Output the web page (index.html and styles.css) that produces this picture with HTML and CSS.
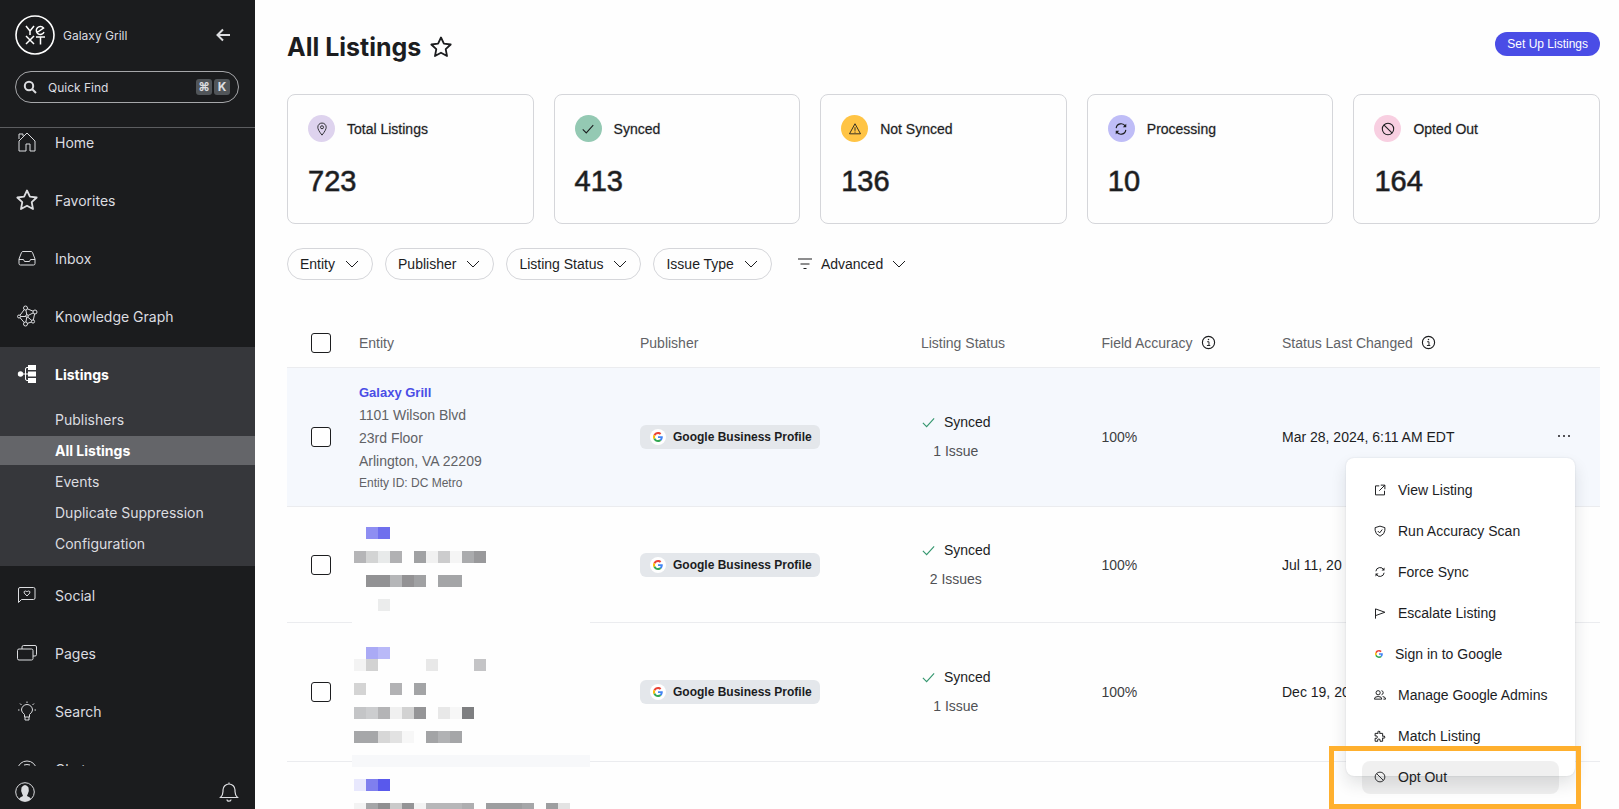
FILE: index.html
```html
<!DOCTYPE html>
<html lang="en">
	<head>
		<meta charset="utf-8">
		<meta name="viewport" content="width=device-width, initial-scale=1">
		<title>All Listings</title>
		<link rel="stylesheet" href="styles.css">
	</head>
	<body>
		<!-- shared icons -->
		<svg class="sprite" aria-hidden="true">
			<symbol id="chevron" viewBox="0 0 16 16"><path d="M2 5l6 6 6-6" fill="none" stroke="currentColor"/></symbol>
			<symbol id="check" viewBox="0 0 16 16"><path d="M2 8.500l4 4 8-9" fill="none" stroke="currentColor" stroke-width="1.200"/></symbol>
			<symbol id="star" viewBox="0 0 24 24"><path d="M12 2.500l2.900 6.200 6.800.8-5 4.700 1.300 6.800-6-3.300L6 21l1.300-6.800-5-4.700 6.800-.8z" fill="none" stroke="currentColor" stroke-width="1.800" stroke-linejoin="round"/></symbol>
			<symbol id="sync" viewBox="0 0 16 16"><path d="M2.500 7A5.600 5.600 0 0 1 13 5M13.500 9A5.600 5.600 0 0 1 3 11" fill="none" stroke="currentColor" stroke-width="1.300"/><path d="M14 2v4h-4zM2 14v-4h4z" fill="currentColor" stroke="none"/></symbol>
			<symbol id="ban" viewBox="0 0 16 16"><g fill="none" stroke="currentColor" stroke-width="1.200"><circle cx="8" cy="8" r="6.500"/><path d="M3.500 3.500l9 9"/></g></symbol>
			<symbol id="info" viewBox="0 0 16 16"><circle cx="8" cy="8" r="6.500" fill="none" stroke="currentColor" stroke-width="1.200"/><path d="M6.500 7.200h2V11M6.300 11.200h3.600" fill="none" stroke="currentColor"/><circle cx="8" cy="4.800" r=".8" fill="currentColor"/></symbol>
			<symbol id="google" viewBox="0 0 48 48">
				<path fill="#ea4335" d="M24 9.500c3.540 0 6.710 1.220 9.210 3.600l6.850-6.850C35.900 2.380 30.470 0 24 0 14.620 0 6.510 5.380 2.560 13.220l7.980 6.190C12.430 13.720 17.740 9.500 24 9.500z"/>
				<path fill="#4285f4" d="M46.980 24.550c0-1.570-.15-3.090-.38-4.550H24v9.020h12.940c-.58 2.960-2.260 5.480-4.780 7.180l7.730 6c4.510-4.180 7.090-10.360 7.090-17.650z"/>
				<path fill="#fbbc05" d="M10.530 28.590c-.48-1.450-.76-2.990-.76-4.590s.27-3.140.76-4.590l-7.980-6.190C.92 16.460 0 20.120 0 24c0 3.880.92 7.540 2.560 10.780l7.970-6.190z"/>
				<path fill="#34a853" d="M24 48c6.480 0 11.930-2.130 15.890-5.810l-7.730-6c-2.150 1.450-4.920 2.300-8.160 2.300-6.260 0-11.570-4.220-13.470-9.910l-7.980 6.190C6.510 42.620 14.620 48 24 48z"/>
			</symbol>
		</svg>

		<div class="app">
			<aside class="sidebar">
				<div class="brand">
					<svg class="logo" viewBox="0 0 40 40" fill="none" stroke="currentColor">
						<circle cx="20" cy="20" r="19" stroke-width="1.600"/>
						<g stroke-width="1.500"><path d="M11 11l4 5 4-5M15 16v4M11 21l8 8M19 21l-8 8M21 22h9M25.500 22v7.500"/><path d="M22 17.500l6.500-4.500A4 4 0 1 0 29 17"/></g>
					</svg>
					<span class="brandName">Galaxy Grill</span>
					<button class="iconButton collapse" aria-label="Collapse menu">
						<svg viewBox="0 0 16 16" width="16" height="16" fill="none" stroke="currentColor" stroke-width="2"><path d="M15 8H2.500M8 2.500L2.500 8 8 13.500"/></svg>
					</button>
				</div>
				<button class="quickFind">
					<svg viewBox="0 0 14 14" width="14" height="14" fill="none" stroke="currentColor" stroke-width="2"><circle cx="6" cy="6" r="4.200"/><path d="M9 9l4 4"/></svg>
					<span>Quick Find</span>
					<kbd>⌘</kbd><kbd>K</kbd>
				</button>
				<nav class="nav">
					<ul>
						<li><a href="#">
							<svg viewBox="0 0 24 24"><path d="M4 21V11l8-8 8 8v10h-5v-7h-4v7zM4 9V4h4v2"/></svg>Home</a></li>
						<li><a href="#"><svg viewBox="0 0 24 24"><use href="#star"/></svg>Favorites</a></li>
						<li><a href="#">
							<svg viewBox="0 0 24 24"><path d="M4 13l2.500-6.500Q7 5.500 8 5.500h8q1 0 1.500 1L20 13v4.500q0 1.500-1.500 1.500h-13Q4 19 4 17.500zM4 13.500h4.500l1 2h5l1-2H20"/></svg>Inbox</a></li>
						<li><a href="#">
							<svg viewBox="0 0 24 24"><g class="edges"><path d="M10.500 4L4 12.500l6.500 7.500 7.500-2.500L20 8l-9.500-4L12 12l8-4M4 12.500h8l6 5M12 12l-1.500 8"/></g><g class="node"><circle cx="10.500" cy="4" r="2"/><circle cx="4" cy="12.500" r="1.500"/><circle cx="20" cy="8" r="2"/><circle cx="18" cy="17.500" r="1.600"/><circle cx="10.500" cy="20" r="2"/><circle cx="12" cy="12" r="1.300"/></g></svg>Knowledge Graph</a></li>
						<li class="open">
							<a href="#"><svg viewBox="0 0 24 24"><path d="M6 12h8M14 5.500h-2q-1.500 0-1.500 1.500v10q0 1.500 1.500 1.500h2"/><g class="solid"><circle cx="5.500" cy="12" r="2.700"/><path d="M13 3h8v5h-8zM13 9.500h8v5h-8zM13 16h8v5h-8z"/></g></svg>Listings</a>
							<ul class="sub">
								<li><a href="#">Publishers</a></li>
								<li><a href="#" class="current" aria-current="page">All Listings</a></li>
								<li><a href="#">Events</a></li>
								<li><a href="#">Duplicate Suppression</a></li>
								<li><a href="#">Configuration</a></li>
							</ul>
						</li>
						<li><a href="#">
							<svg viewBox="0 0 24 24"><path d="M3.500 19.500V6q0-1.500 1.500-1.500h13.500Q20 4.500 20 6v9q0 1.500-1.500 1.500H6.500zM12 13L9.200 10Q8.500 8 10.500 8q1 0 1.500 1 .5-1 1.500-1 2 0 1.300 2z"/></svg>Social</a></li>
						<li><a href="#">
							<svg viewBox="0 0 24 24"><path d="M7 8V6q0-1.500 1.500-1.500h11.500Q21.500 4.500 21.500 6v7.500q0 1.500-1.500 1.500h-2"/><rect x="2.500" y="8" width="15.500" height="11" rx="1.500"/></svg>Pages</a></li>
						<li><a href="#">
							<svg viewBox="0 0 24 24"><path d="M9.500 18v-2.500Q6.500 13 6.500 11a5.500 5.500 0 0 1 11 0q0 2-3 4.500V18zM10 18v3h4v-3M12 2.500v1.500M5 4.500l1.500 1.500M19 4.500L17.500 6M3 11h1.500M19.500 11H21"/></svg>Search</a></li>
						<li><a href="#">
							<svg viewBox="0 0 24 24"><ellipse cx="12" cy="12" rx="9" ry="8"/><path d="M9 8q3-1 6 0"/></svg>Chat</a></li>
					</ul>
				</nav>
				<div class="sidebarFooter">
					<button class="iconButton" aria-label="Account">
						<svg viewBox="0 0 20 20" width="20" height="20"><circle cx="10" cy="10" r="9.300" fill="none" stroke="currentColor"/><path d="M4 17q1-2 4-3-.2-1-.8-2Q5.500 9 6.500 5.500 8 3 10 3t3.500 2.500Q14.500 9 12.800 12q-.6 1-.8 2 3 1 4 3-2.500 2.500-6 2.500T4 17z" fill="currentColor"/></svg>
					</button>
					<button class="iconButton" aria-label="Notifications">
						<svg viewBox="0 0 20 20" width="20" height="20" fill="none" stroke="currentColor" stroke-width="1.200"><path d="M1.500 15.500Q4 13 4 9.500V8a6 6 0 0 1 12 0v1.500q0 3.500 2.500 6zM8 17.500a2 1.700 0 0 0 4 0M10 .5V2"/></svg>
					</button>
				</div>
			</aside>

			<main class="main">
				<header class="pageHeader">
					<h1>All Listings</h1>
					<button class="iconButton" aria-label="Add to favorites"><svg width="24" height="24"><use href="#star"/></svg></button>
					<button class="setUp">Set Up Listings</button>
				</header>

				<section class="cards">
					<article class="card">
						<h2><span class="dot lilac"><svg viewBox="0 0 16 16" fill="none" stroke="currentColor"><path d="M8 15Q3.200 9 3.200 6a4.800 4.800 0 0 1 9.600 0Q12.800 9 8 15z"/><circle cx="8" cy="6" r="1.700"/></svg></span>Total Listings</h2>
						<p>723</p>
					</article>
					<article class="card">
						<h2><span class="dot green"><svg><use href="#check"/></svg></span>Synced</h2>
						<p>413</p>
					</article>
					<article class="card">
						<h2><span class="dot amber"><svg viewBox="0 0 16 16" fill="none" stroke="currentColor"><path d="M8 2l6.300 11.500H1.700zM8 6v4M8 11v1.200"/></svg></span>Not Synced</h2>
						<p>136</p>
					</article>
					<article class="card">
						<h2><span class="dot violet"><svg><use href="#sync"/></svg></span>Processing</h2>
						<p>10</p>
					</article>
					<article class="card">
						<h2><span class="dot pink"><svg><use href="#ban"/></svg></span>Opted Out</h2>
						<p>164</p>
					</article>
				</section>

				<div class="filters">
					<button class="filter">Entity<svg><use href="#chevron"/></svg></button>
					<button class="filter">Publisher<svg><use href="#chevron"/></svg></button>
					<button class="filter">Listing Status<svg><use href="#chevron"/></svg></button>
					<button class="filter">Issue Type<svg><use href="#chevron"/></svg></button>
					<button class="filter advanced"><svg viewBox="0 0 16 16" fill="none" stroke="currentColor"><path d="M1 3h14M3.500 8h9M6.500 12.500h3"/></svg>Advanced<svg><use href="#chevron"/></svg></button>
				</div>

				<table class="listings">
					<thead>
						<tr>
							<th class="colCheck"><input type="checkbox" aria-label="Select all"></th>
							<th class="colWide">Entity</th>
							<th class="colWide">Publisher</th>
							<th class="colNarrow">Listing Status</th>
							<th class="colNarrow"><span class="withInfo">Field Accuracy <svg><use href="#info"/></svg></span></th>
							<th><span class="withInfo">Status Last Changed <svg><use href="#info"/></svg></span></th>
							<th class="colActions"></th>
						</tr>
					</thead>
					<tbody>
						<tr class="tall selected">
							<td class="colCheck"><input type="checkbox" aria-label="Select Galaxy Grill"></td>
							<td class="entity">
								<a href="#">Galaxy Grill</a>
								<div>1101 Wilson Blvd</div>
								<div>23rd Floor</div>
								<div>Arlington, VA 22209</div>
								<small>Entity ID: DC Metro</small>
							</td>
							<td><span class="publisher"><i><svg><use href="#google"/></svg></i>Google Business Profile</span></td>
							<td><div class="status"><span><svg><use href="#check"/></svg>Synced</span><small>1 Issue</small></div></td>
							<td class="accuracy">100%</td>
							<td>Mar 28, 2024, 6:11 AM EDT</td>
							<td class="colActions">
								<button class="iconButton" aria-label="More actions"><svg viewBox="0 0 16 16" width="16" height="16" fill="currentColor"><circle cx="3" cy="8" r="1"/><circle cx="8" cy="8" r="1"/><circle cx="13" cy="8" r="1"/></svg></button>
								<ul class="menu">
									<li><button><svg viewBox="0 0 16 16"><path d="M7 2.500H2v12h12V9M9 1.500h5.500V7M14.500 1.500L7 9"/></svg>View Listing</button></li>
									<li><button><svg viewBox="0 0 16 16"><path d="M8 1.500L14.500 3.500V7q0 5-6.500 8Q1.500 12 1.500 7V3.500zM5 8l2.500 2.500L11 6"/></svg>Run Accuracy Scan</button></li>
									<li><button><svg><use href="#sync"/></svg>Force Sync</button></li>
									<li><button><svg viewBox="0 0 16 16"><path d="M2 15.500V2.500l12.500 4.500L2 11.500"/></svg>Escalate Listing</button></li>
									<li><button class="google"><svg><use href="#google"/></svg>Sign in to Google</button></li>
									<li><button><svg viewBox="0 0 16 16"><circle cx="5.500" cy="5" r="2.800"/><path d="M.5 13.500q0-3.500 5-3.500t5 3.500zM10 2.200a2.800 2.800 0 0 1 0 5.500M11.500 10q4 .5 4 3.500h-3"/></svg>Manage Google Admins</button></li>
									<li><button><svg viewBox="0 0 16 16"><path d="M1.500 4.500h4Q4 1.500 6.500 1.500T7.500 4.500h4v4q3-1.500 3 1t-3 1v4.500h-3.500q1-3-1.500-3T5 15H1.500v-4q3 1 3-1.500t-3-1.500z"/></svg>Match Listing</button></li>
									<li class="marked"><button class="hover"><svg><use href="#ban"/></svg>Opt Out</button></li>
								</ul>
							</td>
						</tr>
						<tr class="short">
							<td class="colCheck"><input type="checkbox" aria-label="Select row 2"></td>
							<td class="redacted">
								<!-- hidden entity details, 12px blocks -->
								<svg viewBox="0 0 238 302" width="238" height="302" aria-hidden="true">
									<rect width="238" height="302" fill="#fefefe"/>
									<g transform="translate(2 20)">
										<path fill="#8e8ef2" d="M12 0h12v12h-12z"/><path fill="#6f6fed" d="M24 0h12v12h-12z"/>
										<path fill="#b5b5b7" d="M0 24h12v12h-12z"/><path fill="#d3d4d4" d="M12 24h12v12h-12z"/><path fill="#e8eaea" d="M24 24h12v12h-12z"/><path fill="#b1b1b3" d="M36 24h12v12h-12z"/><path fill="#a0a1a3" d="M60 24h12v12h-12z"/><path fill="#f1f1f1" d="M72 24h12v12h-12z"/><path fill="#cccccd" d="M84 24h12v12h-12z"/><path fill="#f5f5f5" d="M96 24h12v12h-12z"/><path fill="#aaabad" d="M108 24h12v12h-12z"/><path fill="#99999b" d="M120 24h12v12h-12z"/>
										<path fill="#929294" d="M12 48h24v12h-24z"/><path fill="#b5b6b8" d="M36 48h12v12h-12z"/><path fill="#939294" d="M48 48h12v12h-12z"/><path fill="#a0a1a3" d="M60 48h12v12h-12z"/><path fill="#a4a5a7" d="M84 48h24v12h-24z"/>
										<path fill="#ebecec" d="M24 72h12v12h-12z"/>
										<path fill="#aaaaf5" d="M12 120h12v12h-12z"/><path fill="#b9b9f8" d="M24 120h12v12h-12z"/>
										<path fill="#f3f3f3" d="M0 132h12v12h-12z"/><path fill="#d2d2d2" d="M12 132h12v12h-12z"/><path fill="#e8e8e8" d="M72 132h12v12h-12z"/><path fill="#c4c4c6" d="M120 132h12v12h-12z"/>
										<path fill="#d4d4d4" d="M0 156h12v12h-12z"/><path fill="#b2b2b4" d="M36 156h12v12h-12z"/><path fill="#a3a4a6" d="M60 156h12v12h-12z"/>
										<path fill="#c4c5c7" d="M0 180h12v12h-12z"/><path fill="#cccdcf" d="M12 180h12v12h-12z"/><path fill="#b4b4b6" d="M24 180h12v12h-12z"/><path fill="#f0f0f0" d="M36 180h12v12h-12z"/><path fill="#d2d2d2" d="M48 180h12v12h-12z"/><path fill="#959597" d="M60 180h12v12h-12z"/><path fill="#e8e8e8" d="M84 180h12v12h-12z"/><path fill="#f7f7f7" d="M96 180h12v12h-12z"/><path fill="#7e7f81" d="M108 180h12v12h-12z"/>
										<path fill="#a6a7a9" d="M0 204h24v12h-24z"/><path fill="#d7d7d7" d="M24 204h12v12h-12z"/><path fill="#e2e2e2" d="M36 204h12v12h-12z"/><path fill="#f7f7f7" d="M48 204h12v12h-12z"/><path fill="#a3a4a6" d="M72 204h12v12h-12z"/><path fill="#b1b2b4" d="M84 204h12v12h-12z"/><path fill="#a5a6a8" d="M96 204h12v12h-12z"/>
										<path fill="#f7f8fa" d="M-2 228h238v12h-238z"/>
										<path fill="#e8e8fd" d="M0 252h12v12h-12z"/><path fill="#7f7fee" d="M12 252h12v12h-12z"/><path fill="#5959ec" d="M24 252h12v12h-12z"/>
										<path fill="#f3f3f3" d="M0 276h12v12h-12zM60 276h12v12h-12z"/><path fill="#a5a6a8" d="M12 276h12v12h-12zM168 276h12v12h-12z"/><path fill="#8f8f91" d="M24 276h12v12h-12z"/><path fill="#cacaca" d="M36 276h12v12h-12z"/><path fill="#949496" d="M48 276h12v12h-12z"/><path fill="#b7b7b9" d="M72 276h36v12h-36z"/><path fill="#aeaeb0" d="M108 276h12v12h-12z"/><path fill="#9d9ea0" d="M132 276h36v12h-36zM192 276h12v12h-12z"/><path fill="#e3e3e3" d="M204 276h12v12h-12z"/>
									</g>
								</svg>
							</td>
							<td><span class="publisher"><i><svg><use href="#google"/></svg></i>Google Business Profile</span></td>
							<td><div class="status"><span><svg><use href="#check"/></svg>Synced</span><small>2 Issues</small></div></td>
							<td class="accuracy">100%</td>
							<td>Jul 11, 20</td>
							<td></td>
						</tr>
						<tr class="tall">
							<td class="colCheck"><input type="checkbox" aria-label="Select row 3"></td>
							<td></td>
							<td><span class="publisher"><i><svg><use href="#google"/></svg></i>Google Business Profile</span></td>
							<td><div class="status"><span><svg><use href="#check"/></svg>Synced</span><small>1 Issue</small></div></td>
							<td class="accuracy">100%</td>
							<td>Dec 19, 20</td>
							<td></td>
						</tr>
					</tbody>
				</table>
			</main>
		</div>
	</body>
</html>
```
FILE: styles.css
```css
*{
	box-sizing: border-box;
}

body{
	margin: 0;
	font-family: "Liberation Sans", Arial, sans-serif;
	font-size: 14px;
	color: #1c1d1f;
	background: #fefefe;
}

button{
	font: inherit;
	color: inherit;
	background: none;
	border: none;
	padding: 0;
	cursor: pointer;
}

a{
	text-decoration: none;
}

ul{
	list-style: none;
	margin: 0;
	padding: 0;
}

.sprite{
	display: none;
}

.app{
	display: flex;
	height: 100vh;
	overflow: hidden;
}

.iconButton{
	display: inline-flex;
	align-items: center;
}

/* sidebar */

.sidebar{
	flex: 0 0 255px;
	display: flex;
	flex-direction: column;
	background: #1b1c1e;
	color: #dcdde0;
	font-family: Inter, sans-serif;
}

.brand{
	display: flex;
	align-items: center;
	gap: 8px;
	padding: 15px 24px 0 15px;
	font-size: 12px;
}

.logo{
	width: 40px;
	height: 40px;
	color: #fff;
}

.collapse{
	margin-left: auto;
}

.quickFind{
	display: flex;
	align-items: center;
	gap: 2px;
	height: 32px;
	margin: 16px 16px 24px 15px;
	padding: 0 8px 0 7px;
	border: 1px solid #a6a7aa;
	border-radius: 16px;
	font-size: 12px;
}

.quickFind span{
	flex: 1;
	padding-left: 9px;
	text-align: left;
}

.quickFind kbd{
	width: 16px;
	height: 16px;
	border-radius: 3px;
	background: #515559;
	font: bold 12px/16px Inter, "DejaVu Sans", sans-serif;
	text-align: center;
}

.nav{
	flex: 1;
	min-height: 0;
	overflow: hidden;
	border-top: 1px solid #5c5d60;
}

.nav > ul{
	margin-top: -13px;
}

.nav a{
	display: flex;
	align-items: center;
	gap: 16px;
	height: 58px;
	padding: 0 0 4px 15px;
	font-size: 14px;
	color: inherit;
}

.nav svg{
	width: 24px;
	height: 24px;
	fill: none;
	stroke: currentColor;
}

.nav .node{
	fill: #1b1c1e;
}

.nav .solid{
	fill: currentColor;
	stroke: none;
}

.nav .open{
	margin-bottom: 2px;
	padding-bottom: 8px;
	background: #36373b;
}

.nav .open > a,
.nav .current{
	font-weight: bold;
	color: #fff;
}

.nav .sub{
	display: grid;
	gap: 2px;
}

.nav .sub a{
	height: 29px;
	padding: 0 0 0 55px;
}

.nav .sub .current{
	background: #646569;
}

.sidebarFooter{
	display: flex;
	justify-content: space-between;
	height: 43px;
	padding: 9px 16px 0 15px;
}

/* main */

.main{
	flex: 1;
	min-width: 0;
	padding: 32px 19px 0 32px;
}

.pageHeader{
	display: flex;
	align-items: center;
	gap: 8px;
	height: 30px;
	margin-bottom: 32px;
}

.pageHeader h1{
	margin: 0;
	font: bold 25px/30px Inter, sans-serif;
}

.setUp{
	align-self: flex-start;
	height: 24px;
	margin-left: auto;
	padding: 0 12px;
	border-radius: 12px;
	background: #4a4de6;
	color: #fff;
	font-size: 12px;
}

.cards{
	display: grid;
	grid-template-columns: repeat(5, 1fr);
	gap: 20px;
}

.card{
	padding: 20px 20px 26px;
	border: 1px solid #d5d6da;
	border-radius: 8px;
}

.card h2{
	display: flex;
	align-items: center;
	gap: 12px;
	margin: 0 0 23px;
	font-size: 14px;
	font-weight: 500;
	-webkit-text-stroke: 1px rgba(28, 29, 31, .25);
}

.card p{
	margin: 0;
	font-size: 29px;
	line-height: 32px;
	-webkit-text-stroke: 1px rgba(28, 29, 31, .6);
}

.dot{
	display: flex;
	align-items: center;
	justify-content: center;
	width: 27px;
	height: 27px;
	border-radius: 50%;
}

.dot svg{
	width: 14px;
	height: 14px;
}

.lilac{ background: #ded3ee; }
.green{ background: #94c9b3; }
.amber{ background: #ffc445; }
.violet{ background: #bfbdf7; }
.pink{ background: #f8cfe1; }

.filters{
	display: flex;
	gap: 12px;
	margin: 24px 0 40px;
}

.filter{
	display: flex;
	align-items: center;
	gap: 9px;
	height: 32px;
	padding: 0 12px;
	border: 1px solid #d5d6da;
	border-radius: 16px;
}

.filter svg{
	width: 16px;
	height: 16px;
}

.advanced{
	gap: 8px;
	border-color: transparent;
}

/* table */

.listings{
	width: 100%;
	table-layout: fixed;
	border-spacing: 0;
}

.listings th,
.listings td{
	padding: 0;
	border-bottom: 1px solid #ebecef;
	text-align: left;
	vertical-align: middle;
}

.listings th{
	height: 48px;
	padding-bottom: 2px;
	font-weight: normal;
	color: #616266;
}

.listings .colCheck{
	width: 72px;
	padding-left: 24px;
}

.colWide{
	width: 21.4%;
}

.colNarrow{
	width: 13.75%;
}

.listings .colActions{
	position: relative;
	width: 70px;
	padding-right: 2px;
	text-align: center;
}

.tall{
	height: 139px;
}

.short{
	height: 116px;
}

.selected td{
	background: #f5f8fd;
}

input[type="checkbox"]{
	appearance: none;
	display: block;
	width: 20px;
	height: 20px;
	margin: 0;
	border: 1px solid #1c1d1f;
	border-radius: 3px;
	background: #fff;
}

.withInfo{
	display: flex;
	align-items: center;
	gap: 8px;
}

.withInfo svg{
	width: 15px;
	height: 15px;
	color: #1c1d1f;
}

.entity{
	line-height: 23px;
	color: #616266;
}

.entity a{
	display: block;
	font-size: 13px;
	font-weight: bold;
	color: #4a4de6;
}

.entity small{
	display: block;
	font-size: 12px;
	line-height: 20px;
}

.publisher{
	display: inline-flex;
	align-items: center;
	gap: 7px;
	height: 24px;
	padding: 0 8px 0 10px;
	border-radius: 6px;
	background: #e4e7eb;
	font-size: 12px;
	font-weight: bold;
	vertical-align: middle;
}

.publisher i{
	display: flex;
	align-items: center;
	justify-content: center;
	width: 16px;
	height: 16px;
	border-radius: 50%;
	background: #fff;
}

.publisher svg{
	width: 10px;
	height: 10px;
}

.status{
	display: inline-block;
	line-height: 29px;
	text-align: center;
	vertical-align: middle;
}

.status span{
	display: flex;
	align-items: center;
	gap: 8px;
}

.status small{
	display: block;
	font-size: 14px;
	color: #505155;
}

.status svg{
	width: 15px;
	height: 15px;
	color: #35976f;
}

.accuracy{
	color: #3c3d40;
}

.listings .redacted{
	position: relative;
}

.redacted svg{
	position: absolute;
	top: 0;
	left: -7px;
}

/* row menu */

.menu{
	position: absolute;
	z-index: 2;
	top: 90px;
	right: 25px;
	display: grid;
	gap: 8px;
	width: 229px;
	height: 318px;
	padding: 16px;
	border-radius: 8px;
	background: #fff;
	box-shadow: 0 8px 16px rgba(28, 29, 40, .12), 0 0 2px rgba(28, 29, 40, .12);
}

.menu button{
	display: flex;
	align-items: center;
	gap: 12px;
	width: 100%;
	height: 33px;
	padding: 0 12px 2px;
	border-radius: 8px;
	white-space: nowrap;
}

.menu svg{
	width: 12px;
	height: 12px;
	fill: none;
	stroke: currentColor;
	stroke-width: 1.3;
}

.menu .google svg{
	width: 8px;
	height: 8px;
	margin-left: 1px;
	stroke: none;
}

.menu .hover{
	background: rgba(0, 0, 0, .06);
}

/* frame round the item to click */
.marked{
	position: relative;
}

.marked::after{
	content: "";
	position: absolute;
	inset: -15px -22px -15px -33px;
	border: 5px solid #ffb02e;
	pointer-events: none;
}
```
